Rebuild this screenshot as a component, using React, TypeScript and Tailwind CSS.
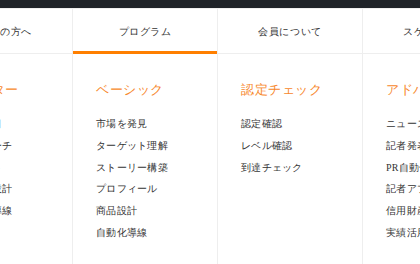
import React from "react";

const cols = [
  {
    tab: "初めての方へ",
    heading: "スターター",
    items: ["全体の項目", "市場リサーチ", "コンセプト", "サービス設計", "セールス導線"],
  },
  {
    tab: "プログラム",
    heading: "ベーシック",
    items: ["市場を発見", "ターゲット理解", "ストーリー構築", "プロフィール", "商品設計", "自動化導線"],
  },
  {
    tab: "会員について",
    heading: "認定チェック",
    items: ["認定確認", "レベル確認", "到達チェック"],
  },
  {
    tab: "スケジュール",
    heading: "アドバンス",
    items: ["ニュース配信", "記者発表会", "PR自動化", "記者アプローチ", "信用財産", "実績活用"],
  },
];

export default function App() {
  return (
    <div
      className="w-[420px] h-[264px] overflow-hidden bg-white"
      style={{ fontFamily: '"Liberation Serif", serif' }}
    >
      <div className="h-[8px] bg-[#1f2328]" />
      <div className="ml-[-72px] flex w-[600px] border-t border-[#eeeeee]">
        {cols.map((c, i) => (
          <div key={i} className="w-[145px] shrink-0 border-r border-[#eeeeee] flex flex-col">
            <div
              className={
                "h-[45px] flex items-center justify-center text-[10px] tracking-[0.6px] text-[#333] border-b " +
                (i === 1 ? "border-b-[3px] border-[#ff7f00] pt-[3px]" : "border-[#eeeeee] pt-[1px]")
              }
            >
              {c.tab}
            </div>
            <div className="pl-[23px] pt-[28px] h-[300px]">
              <div className="text-[13px] tracking-[0.5px] text-[#f7872b] leading-[16px]">{c.heading}</div>
              <div className="mt-[18px] flex flex-col gap-[5.8px]">
                {c.items.map((it, j) => (
                  <div key={j} className="text-[10px] tracking-[0.3px] leading-[16px] text-[#333]">
                    {it}
                  </div>
                ))}
              </div>
            </div>
          </div>
        ))}
      </div>
    </div>
  );
}
